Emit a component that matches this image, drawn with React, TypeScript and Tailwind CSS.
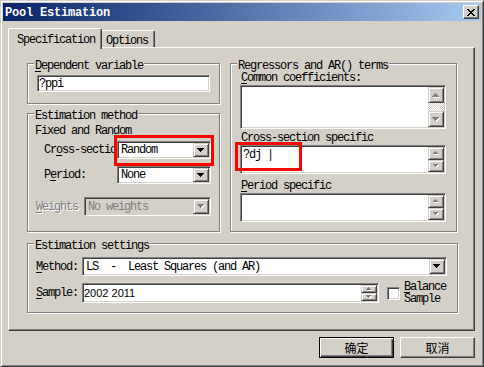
import clsx from "clsx";
import type { ReactNode } from "react";

// classic 3D edges
const sunken =
  "border border-t-[#808080] border-l-[#808080] border-r-white border-b-white shadow-[inset_1px_1px_0_#404040,inset_-1px_-1px_0_#d4d0c8]";
const raised =
  "border border-t-white border-l-white border-r-[#404040] border-b-[#404040] shadow-[inset_-1px_-1px_0_#808080]";
const scrollBtn =
  "border border-t-[#d4d0c8] border-l-[#d4d0c8] border-r-[#404040] border-b-[#404040] shadow-[inset_1px_1px_0_#fff,inset_-1px_-1px_0_#808080] bg-[#d4d0c8] flex items-center justify-center";

const Arrow = ({
  up = false,
  disabled = false,
  small = false,
}: {
  up?: boolean;
  disabled?: boolean;
  small?: boolean;
}) => {
  const rows = small ? [5, 3, 1] : [7, 5, 3, 1];
  const w = rows[0];
  const order = up ? [...rows].reverse() : rows;
  const draw = (dx: number, dy: number, fill: string) =>
    order.map((n, i) => (
      <rect
        key={fill + i}
        x={(w - n) / 2 + dx}
        y={i + dy}
        width={n}
        height={1}
        fill={fill}
      />
    ));
  return (
    <svg width={w + 1} height={rows.length + 1} shapeRendering="crispEdges">
      {disabled && draw(1, 1, "#fff")}
      {draw(0, 0, disabled ? "#808080" : "#000")}
    </svg>
  );
};

const CloseGlyph = () => {
  const px = [
    "XX....XX",
    ".XX..XX.",
    "..XXXX..",
    "...XX...",
    "..XXXX..",
    ".XX..XX.",
    "XX....XX",
  ];
  return (
    <svg width="8" height="7" shapeRendering="crispEdges">
      {px.flatMap((row, y) =>
        row
          .split("")
          .map((c, x) =>
            c === "X" ? <rect key={`${x}-${y}`} x={x} y={y} width={1} height={1} fill="#000" /> : null
          )
      )}
    </svg>
  );
};

const U = ({ children }: { children: ReactNode }) => (
  <span className="underline underline-offset-2">{children}</span>
);

const Group = ({
  label,
  className,
  children,
}: {
  label: ReactNode;
  className?: string;
  children: ReactNode;
}) => (
  <div
    className={clsx(
      "relative border border-[#808080] shadow-[inset_1px_1px_0_#fff,1px_1px_0_#fff]",
      className
    )}
  >
    <span className="absolute left-[6px] top-[-4px] px-[1px] bg-[#d4d0c8] leading-[12px] whitespace-nowrap">
      {label}
    </span>
    {children}
  </div>
);

const Combo = ({
  value,
  className,
  disabled = false,
}: {
  value: string;
  className?: string;
  disabled?: boolean;
}) => (
  <div
    className={clsx(
      sunken,
      "flex p-[1px]",
      disabled ? "bg-[#d4d0c8] text-[#808080]" : "bg-white",
      className
    )}
  >
    <span className="flex-1 self-center pl-[2px] whitespace-pre">{value}</span>
    <div className={clsx(scrollBtn, "w-[16px]")}>
      <Arrow disabled={disabled} />
    </div>
  </div>
);

const VScroll = ({ track = false }: { track?: boolean }) => (
  <div className="w-[16px] flex flex-col">
    <div className={clsx(scrollBtn, track ? "h-[16px]" : "flex-1")}>
      <Arrow up disabled small={!track} />
    </div>
    {track && (
      <div className="flex-1 bg-[image:repeating-conic-gradient(#fff_0_25%,#d4d0c8_0_50%)] bg-[length:2px_2px]" />
    )}
    <div className={clsx(scrollBtn, track ? "h-[16px]" : "flex-1")}>
      <Arrow disabled small={!track} />
    </div>
  </div>
);

const ListBox = ({ text, h, track }: { text?: ReactNode; h: string; track?: boolean }) => (
  <div className={clsx(sunken, "w-[206px] flex p-[1px] bg-white", h)}>
    <div className="flex-1 pl-[1px] pt-[2px] whitespace-pre">{text}</div>
    <VScroll track={track} />
  </div>
);

export default function App() {
  return (
    <div className="relative w-[484px] h-[367px] bg-[#d4d0c8] border border-t-[#d4d0c8] border-l-[#d4d0c8] border-r-[#404040] border-b-[#404040] shadow-[inset_1px_1px_0_#fff,inset_-1px_-1px_0_#808080] p-[2px] flex flex-col text-black text-[12px] leading-[12px] tracking-[-1.2px] font-['Liberation_Mono',monospace]">
      {/* title bar */}
      <div className="h-[18px] flex items-center bg-gradient-to-r from-[#0a246a] to-[#a6caf0] px-[2px]">
        <span className="flex-1 pt-[2px] text-white font-bold tracking-[-0.2px]">Pool Estimation</span>
        <div className={clsx(raised, "w-[16px] h-[14px] bg-[#d4d0c8] flex items-center justify-center")}>
          <CloseGlyph />
        </div>
      </div>

      {/* tabs */}
      <div className="flex items-end h-[19px] mt-[7px] ml-[5px]">
        <div className="relative z-10 w-[94px] h-[21px] -mb-[2px] bg-[#d4d0c8] border-t border-l border-r border-t-white border-l-white border-r-[#404040] shadow-[inset_-1px_0_0_#808080] rounded-t-[2px] flex items-center pl-[8px] pt-[2px]">
          Specification
        </div>
        <div className="w-[53px] h-[17px] border-t border-r border-t-white border-r-[#404040] shadow-[inset_-1px_0_0_#808080] rounded-tr-[2px] flex items-center pl-[4px] pt-[4px]">
          Options
        </div>
      </div>

      {/* tab page */}
      <div className="ml-[5px] w-[467px] h-[284px] border border-t-white border-l-white border-r-[#404040] border-b-[#404040] shadow-[inset_-1px_-1px_0_#808080] pt-[15px] pl-[18px]">
        <div className="flex gap-[10px]">
          <div className="w-[193px] flex flex-col gap-[9px]">
            <Group
              label={
                <>
                  <U>D</U>ependent variable
                </>
              }
              className="h-[41px] pl-[9px] pt-[11px]"
            >
              <div className={clsx(sunken, "w-[173px] h-[17px] bg-white pl-[1px] flex items-center")}>
                ?ppi
              </div>
            </Group>

            <Group label="Estimation method" className="h-[119px] pt-[10px]">
              <div className="relative top-[1px] pl-[7px]">Fixed and Random</div>
              <div className="flex items-center h-[18px] mt-[5px] pl-[16px]">
                <span className="w-[73px] overflow-hidden whitespace-nowrap">
                  Cr<U>o</U>ss-section:
                </span>
                <Combo value="Random" className="w-[94px] h-[18px]" />
              </div>
              <div className="flex items-center h-[18px] mt-[7px] pl-[16px]">
                <span className="w-[73px]">
                  P<U>e</U>riod:
                </span>
                <Combo value="None" className="w-[94px] h-[18px]" />
              </div>
              <div className="flex items-center h-[19px] mt-[13px] pl-[8px]">
                <span className="w-[48px] text-[#808080] [text-shadow:1px_1px_0_#fff]">
                  <U>W</U>eights
                </span>
                <Combo value="No weights" disabled className="w-[127px] h-[19px]" />
              </div>
            </Group>
          </div>

          <Group label="Regressors and AR() terms" className="w-[227px] h-[169px] pl-[9px] pt-[6px]">
            <div className="relative top-[2px] ml-[1px]">
              <U>C</U>ommon coefficients:
            </div>
            <div className="mt-[3px]">
              <ListBox h="h-[44px]" track />
            </div>
            <div className="relative top-[2px] ml-[1px] mt-[1px]">
              C<U>r</U>oss-section specific
            </div>
            <div className="mt-[3px]">
              <ListBox h="h-[29px]" text="?dj |" />
            </div>
            <div className="relative top-[2px] ml-[1px] mt-[4px]">
              <U>P</U>eriod specific
            </div>
            <div className="mt-[3px]">
              <ListBox h="h-[29px]" />
            </div>
          </Group>
        </div>

        <Group label="Estimation settings" className="mt-[11px] w-[431px] h-[70px] pt-[13px] pl-[8px]">
          <div className="flex items-center h-[19px]">
            <span className="w-[46px]">
              <U>M</U>ethod:
            </span>
            <Combo value="LS  -  Least Squares (and AR)" className="w-[365px] h-[19px]" />
          </div>
          <div className="flex items-center h-[20px] mt-[7px]">
            <span className="w-[46px]">
              <U>S</U>ample:
            </span>
            <div className={clsx(sunken, "w-[297px] h-[20px] bg-white flex p-[1px]")}>
              <span className="flex-1 self-center font-['Liberation_Sans',sans-serif] text-[11px] tracking-normal">
                2002 2011
              </span>
              <VScroll />
            </div>
            <div className={clsx(sunken, "ml-[8px] w-[13px] h-[13px] bg-white")} />
            <div className="ml-[4px] leading-[12px]">
              <div>
                <U>B</U>alance
              </div>
              <div>Sample</div>
            </div>
          </div>
        </Group>
      </div>

      {/* dialog buttons */}
      <div className="flex justify-end gap-[6px] mt-[6px] mr-[6px] font-['Noto_Sans_CJK_SC',sans-serif] tracking-normal">
        <div className="w-[75px] h-[21px] border border-black shadow-[inset_1px_1px_0_#fff,inset_-1px_-1px_0_#404040,inset_-2px_-2px_0_#808080] flex items-center justify-center">
          确定
        </div>
        <div className={clsx(raised, "w-[75px] h-[21px] flex items-center justify-center")}>取消</div>
      </div>

      {/* red annotation boxes */}
      <div className="absolute left-[113px] top-[134px] w-[100px] h-[31px] border-[3px] border-[#ff0000]" />
      <div className="absolute left-[234px] top-[141px] w-[67px] h-[29px] border-[3px] border-[#ff0000]" />
    </div>
  );
}
